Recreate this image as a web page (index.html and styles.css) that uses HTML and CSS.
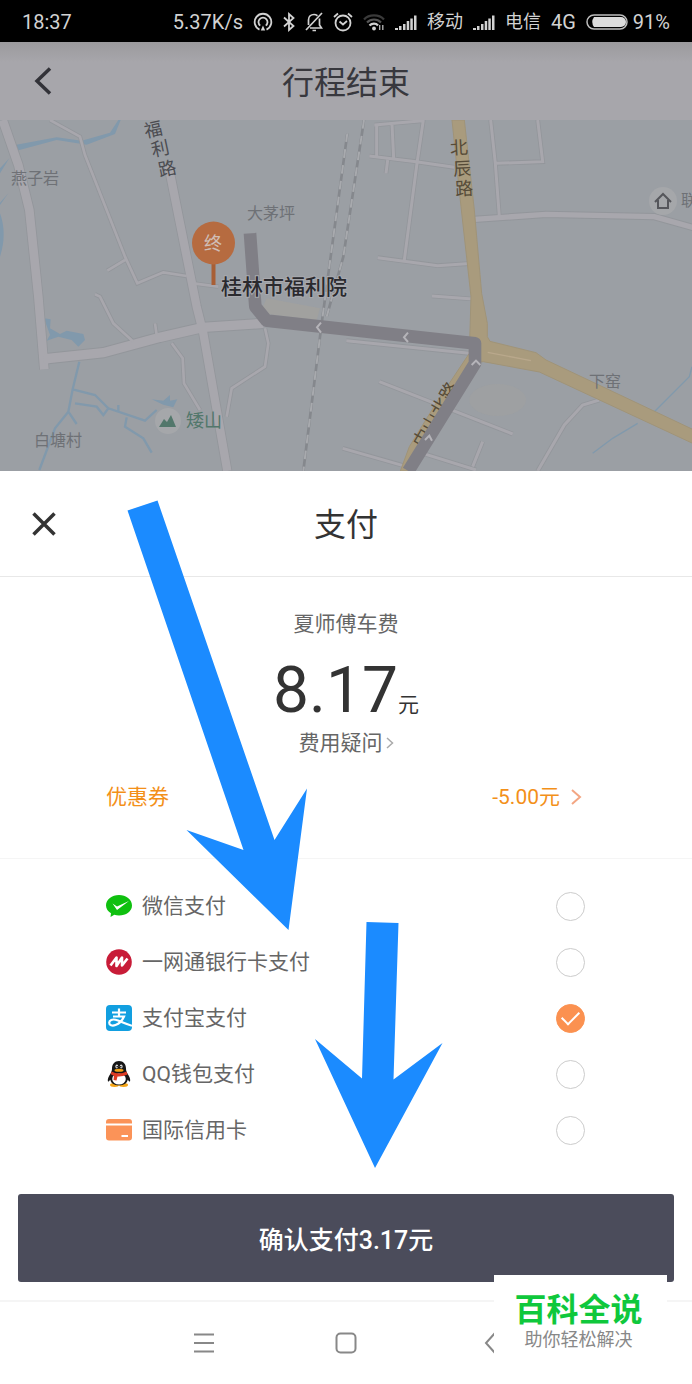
FILE: index.html
```html
<!DOCTYPE html>
<html lang="zh-CN">
<head>
<meta charset="UTF-8">
<meta name="viewport" content="width=device-width, initial-scale=1">
<title>支付</title>
<link rel="stylesheet" href="styles.css">
</head>
<body>
<div class="screen">

<div class="status">
    <span>18:37</span>
    <div class="status-right">
        <span>5.37K/s</span>
        <svg width="20" height="20" viewBox="0 0 20 20" fill="none" stroke="#d2d2d2" stroke-width="1.8">
            <path d="M6.5 17.6A8.3 8.3 0 1 1 13.5 17.6M7.2 13.6A4.5 4.5 0 1 1 12.8 13.6"/>
            <path d="M10 13.5L12.2 18.5H7.8Z" fill="#d2d2d2" stroke="none"/>
        </svg>
        <svg width="12" height="20" viewBox="0 0 12 20" fill="none" stroke="#d2d2d2" stroke-width="1.8">
            <path d="M1 5.5L10.5 14 6 18V2L10.5 6 1 14.5"/>
        </svg>
        <svg width="18" height="20" viewBox="0 0 18 20" fill="none" stroke="#d2d2d2" stroke-width="1.7">
            <path d="M1 18L17 1M3.5 13V8C3.5 4.500 6 2.500 9 2.500 10.500 2.500 11.500 3 12.500 3.700M14.500 6.500V13L16.500 16H5M7.500 18.500H11"/>
        </svg>
        <svg width="20" height="20" viewBox="0 0 20 20" fill="none" stroke="#d2d2d2" stroke-width="1.8">
            <circle cx="10" cy="11" r="7.500"/>
            <path d="M6.500 9.500L10 12.500 14 9M1 5L5 1.500M19 5L15 1.500"/>
        </svg>
        <svg width="22" height="20" viewBox="0 0 22 20" fill="none" stroke-width="2.200">
            <path d="M1 7.500C6 2 16 2 21 7.500" stroke="#3a3a3a"/>
            <path d="M4 10.500C8 6.500 14 6.500 18 10.500" stroke="#555"/>
            <path d="M6.500 13.500C9 11 13 11 15 13.500" stroke="#d2d2d2"/>
            <circle cx="11" cy="16.500" r="1.900" fill="#d2d2d2"/>
            <path d="M16.700 13V18M19.800 13V18" stroke="#bbb" stroke-width="1.300"/>
        </svg>
        <svg class="signal" width="22" height="20" viewBox="0 0 22 20"><path d="M0 16H3V18H0ZM4 14H6.500V18H4ZM8 12H10.500V18H8ZM11.700 9H14.200V18H11.700ZM15.300 6.500H17.800V18H15.300ZM19 3.500H21.500V18H19Z"/></svg>
        <span class="carrier">移动</span>
        <svg class="signal" width="22" height="20" viewBox="0 0 22 20"><path d="M0 16H3V18H0ZM4 14H6.500V18H4ZM8 12H10.500V18H8ZM11.700 9H14.200V18H11.700ZM15.300 6.500H17.800V18H15.300ZM19 3.500H21.500V18H19Z"/></svg>
        <span class="carrier">电信</span>
        <span>4G</span>
        <div class="battery">
            <svg width="42" height="16" viewBox="0 0 42 16">
                <rect x="1" y="1" width="40" height="14" rx="7" fill="none" stroke="#bdbdbd" stroke-width="1.500"/>
                <path d="M8 3H35A5 5 0 0 1 35 13H8Q4.500 8 8 3Z" fill="#dcdcdc"/>
            </svg>
            <span>91%</span>
        </div>
    </div>
</div>

<header class="trip-bar">
    <button class="icon-btn" aria-label="返回">
        <svg width="28" height="28" viewBox="0 0 28 28" fill="none" stroke="#323238" stroke-width="3.500"><path d="M20 1.500L7 14 20 26.500"/></svg>
    </button>
    <h1>行程结束</h1>
</header>

<svg class="map" viewBox="0 0 692 351" preserveAspectRatio="xMidYMid slice">
    <!-- west half, drawn on a 3x grid -->
    <g transform="translate(0 -10) scale(.33333)">
        <g class="water">
            <path d="M45 105L170 82 245 92 330 68 355 30H362L345 72 260 104 170 90 50 122Z"/>
            <path d="M0 310Q22 370 0 440Z"/>
            <path d="M28 145L0 190V175ZM25 250L0 285V278Z"/>
            <path d="M132 625L152 628 150 655 180 672 200 662 250 672 255 690 235 710 215 690 175 680 140 692 150 675Z"/>
            <path d="M455 868L490 872 510 855 510 872 532 868 520 892 490 884Z"/>
        </g>
        <g class="stream">
            <path d="M238 755L218 838 205 905 165 955 118 1080M218 838L285 855 325 895 435 932 470 900M205 905L230 942M225 880L290 890 310 915 325 895M380 922L375 950 430 985 455 1028M355 905V885" stroke-width="7"/>
        </g>
        <path d="M780 610L800 565 960 595 950 630Z" fill="#a1a19f"/>
        <g class="edge">
            <path d="M8 30L55 165 88 300 115 560 133 778" stroke-width="31"/>
            <path d="M130 747L310 728 480 682 610 652 790 640" stroke-width="34"/>
            <path d="M505 165L540 340 590 590 610 670 682 1083" stroke-width="30"/>
            <path d="M150 30L240 80 255 135 320 300 375 440 412 520 490 487 560 498M375 450L322 482M285 553L300 560 340 640 400 695M465 640L470 675M515 700L548 745 552 820 600 900M795 655L805 700 795 770 695 835 680 920M580 520L655 530" stroke-width="13"/>
        </g>
        <g class="road">
            <path d="M8 30L55 165 88 300 115 560 133 778" stroke-width="26"/>
            <path d="M130 747L310 728 480 682 610 652 790 640" stroke-width="28"/>
            <path d="M505 165L540 340 590 590 610 670 682 1083" stroke-width="25"/>
            <path d="M150 30L240 80 255 135 320 300 375 440 412 520 490 487 560 498M375 450L322 482M285 553L300 560 340 640 400 695M465 640L470 675M515 700L548 745 552 820 600 900M795 655L805 700 795 770 695 835 680 920M580 520L655 530" stroke-width="8"/>
        </g>
        <g class="rail">
            <path d="M1042 70L965 640 910 1083M1092 30L1030 440 980 620"/>
            <path class="rail-gap" d="M1042 70L965 640 910 1083M1092 30L1030 440 980 620"/>
        </g>
    </g>
    <!-- east half -->
    <g transform="translate(346 -10) scale(.33333)">
        <ellipse cx="455" cy="870" rx="85" ry="48" fill="#a1a19f" opacity=".5"/>
        <path class="stream" d="M1038 770L1030 800 925 905M875 940L800 985 740 1030" stroke-width="4"/>
        <g class="edge">
            <path d="M85 45L230 32M92 45V138M138 42L143 145M70 138L210 155 325 172M125 150L120 190M232 30L213 160 175 450M95 443L275 467 380 460M258 558L380 567M434 30L448 160 460 320M448 160L590 155 575 30M100 815L500 972M-10 1015L200 1075M230 1030L390 1080M410 995L380 1070M760 870L710 885 655 945 575 1083M1 692L370 730" stroke-width="14"/>
            <path d="M385 328L600 313 925 320 1050 355" stroke-width="22"/>
        </g>
        <g class="road">
            <path d="M85 45L230 32M92 45V138M138 42L143 145M70 138L210 155 325 172M125 150L120 190M232 30L213 160 175 450M95 443L275 467 380 460M258 558L380 567M434 30L448 160 460 320M448 160L590 155 575 30M100 815L500 972M-10 1015L200 1075M230 1030L390 1080M410 995L380 1070M760 870L710 885 655 945 575 1083M1 692L370 730" stroke-width="9"/>
            <path d="M385 328L600 313 925 320 1050 355" stroke-width="16"/>
        </g>
        <path class="main-road" d="M318 30H355L385 300 407 550 424 640V680L432 694 570 728 600 750 1040 958V1000L580 786 412 755 375 760 280 900 195 1083H163L190 1010 270 880 370 730 375 560 345 290Z"/>
        <path d="M425 727L555 752" stroke="#b9a88c" stroke-width="4"/>
    </g>

    <g class="road-name">
        <text x="144" y="16" transform="rotate(-12 153 9)">福</text>
        <text x="151" y="35" transform="rotate(-12 160 28)">利</text>
        <text x="158" y="55" transform="rotate(-12 167 48)">路</text>
    </g>
    <g class="road-name road-name-main">
        <text x="450" y="34" transform="rotate(-3 460 28)">北</text>
        <text x="453" y="55" transform="rotate(-3 462 48)">辰</text>
        <text x="455" y="75" transform="rotate(-3 464 68)">路</text>
        <text x="423" y="329" transform="rotate(-60 423 329)">中山北路</text>
    </g>

    <!-- driven route -->
    <g transform="translate(0 -10) scale(.33333)">
        <path class="route" d="M750 370L766 590 800 632 1425 700V760L1225 1083"/>
        <path class="route-mark" d="M963 638L951 652 963 668M1224 668L1212 682 1224 696M1415 765L1428 752 1441 765M1275 990L1288 977 1296 992"/>
    </g>

    <g class="place">
        <text x="11" y="64">燕子岩</text>
        <text x="247" y="99">大茅坪</text>
        <text x="34" y="326">白塘村</text>
        <text x="589" y="267">下窑</text>
        <text x="681" y="86">联</text>
    </g>
    <circle cx="168" cy="301" r="13" fill="#a5a7aa"/>
    <path d="M159 307L164 299 167 302 171 295 176 307Z" fill="#52776b"/>
    <text class="park" x="186" y="307">矮山</text>
    <circle cx="663" cy="81" r="14" fill="#a5a7aa"/>
    <path d="M655 82L663 74 671 82M658 80V88H668V80" fill="none" stroke="#55565b" stroke-width="2"/>

    <path d="M213.500 140V165" stroke="#a85f36" stroke-width="4"/>
    <circle cx="213.500" cy="123" r="21.500" fill="#b66b40"/>
    <text class="pin-text" x="213" y="130">终</text>
    <text class="dest" x="221" y="174">桂林市福利院</text>
</svg>

<main class="sheet">
    <div class="sheet-head">
        <button class="icon-btn" aria-label="关闭">
            <svg width="28" height="28" viewBox="0 0 28 28" fill="none" stroke="#333" stroke-width="3.500"><path d="M3.500 3.500L24.500 24.500M24.500 3.500L3.500 24.500"/></svg>
        </button>
        <h2>支付</h2>
    </div>

    <section class="fare">
        <p class="driver">夏师傅车费</p>
        <p class="price">8.17<span class="unit">元</span></p>
        <a class="question" href="#">费用疑问<svg width="8" height="12" viewBox="0 0 8 12" fill="none" stroke="#aaa" stroke-width="1.500"><path d="M1 1L6.500 6 1 11"/></svg></a>
        <a class="coupon" href="#">
            <span>优惠券</span>
            <span class="coupon-value">-5.00元<svg width="12" height="16" viewBox="0 0 12 16" fill="none" stroke="#f3a683" stroke-width="2"><path d="M2 1L10 8 2 15"/></svg></span>
        </a>
    </section>

    <form class="pay">
        <label class="method">
            <svg width="26" height="26" viewBox="0 0 26 26">
                <path d="M13 2C20 2 26 6.500 26 12.500S20 22.500 13 22.500C11.200 22.500 9.800 22.300 8.300 21.800L4.500 24 5 20.300C2 18.500 0 15.800 0 12.500 0 6.500 6 2 13 2Z" fill="#0fc00f"/>
                <path d="M6.500 10.500L11 13.500 23 8 11 17Z" fill="#fff"/>
            </svg>
            <span>微信支付</span>
            <input type="radio" name="method">
        </label>
        <label class="method">
            <svg width="26" height="26" viewBox="0 0 26 26">
                <circle cx="13" cy="13" r="12.800" fill="#c81c38"/>
                <path d="M4.500 16.500L10.500 8.500 10.500 17 16 8.500V16.500L21.500 9.500" fill="none" stroke="#fff" stroke-width="2.600" stroke-linejoin="round"/>
            </svg>
            <span>一网通银行卡支付</span>
            <input type="radio" name="method">
        </label>
        <label class="method">
            <svg width="26" height="26" viewBox="0 0 26 26">
                <rect width="26" height="26" rx="4" fill="#129fe0"/>
                <path d="M6 7.500H20M13 3.500V11.500M7 11.500H18C16.500 15 13.500 18.500 9.500 20 6 21.300 3.200 20 3.200 17.700 3.200 15 6.500 14 9.500 14.800 14 16 18 18.500 26 20.800" fill="none" stroke="#fff" stroke-width="2.200"/>
            </svg>
            <span>支付宝支付</span>
            <input type="radio" name="method" checked>
        </label>
        <label class="method">
            <svg width="26" height="26" viewBox="0 0 26 26">
                <ellipse cx="8.500" cy="24" rx="4.500" ry="1.900" fill="#f5a516"/>
                <ellipse cx="17.500" cy="24" rx="4.500" ry="1.900" fill="#f5a516"/>
                <path d="M13 0C8.500 0 6 3.200 6 7.500 6 9.500 5.500 11 4.300 13 2.500 15.800 1.200 18.500 2 20.500 3 20.500 3.500 19.500 4.300 18.700 5 22.500 8.500 24.300 13 24.300S21 22.500 21.700 18.700C22.500 19.500 23 20.500 24 20.500 24.800 18.500 23.500 15.800 21.700 13 20.500 11 20 9.500 20 7.500 20 3.200 17.500 0 13 0Z" fill="#161616"/>
                <ellipse cx="13" cy="18" rx="6.800" ry="5.500" fill="#fff"/>
                <ellipse cx="10.800" cy="5.500" rx="1.400" ry="2" fill="#ddd"/>
                <ellipse cx="15.200" cy="5.500" rx="1.400" ry="2" fill="#ddd"/>
                <circle cx="11.200" cy="5.800" r=".8"/>
                <circle cx="14.800" cy="5.800" r=".8"/>
                <ellipse cx="13" cy="9.300" rx="4.500" ry="1.500" fill="#f5a516"/>
                <path d="M5.500 10.500Q13 14.500 20.500 10.500L21.500 13.500Q16 16 11.500 15.500L10.500 19.500 7.500 19 8 14.800 4.800 13.200Z" fill="#dd3b24"/>
            </svg>
            <span>QQ钱包支付</span>
            <input type="radio" name="method">
        </label>
        <label class="method">
            <svg width="26" height="26" viewBox="0 0 26 26">
                <path d="M3 2H23A3 3 0 0 1 26 5V6.500H0V5A3 3 0 0 1 3 2ZM0 8.500H26V20.500A3 3 0 0 1 23 23.500H3A3 3 0 0 1 0 20.500Z" fill="#fb9358"/>
                <path d="M15.500 19H22" stroke="#fff" stroke-width="2"/>
            </svg>
            <span>国际信用卡</span>
            <input type="radio" name="method">
        </label>
        <button class="confirm" type="button">确认支付3.17元</button>
    </form>
</main>

<nav class="nav">
    <button class="icon-btn" aria-label="菜单"><svg width="24" height="24" viewBox="0 0 24 24" fill="none" stroke="#888" stroke-width="2"><path d="M2 3.500H22M2 12H22M2 20.500H22"/></svg></button>
    <button class="icon-btn" aria-label="主页"><svg width="24" height="24" viewBox="0 0 24 24" fill="none" stroke="#888" stroke-width="2"><rect x="2.500" y="2.500" width="19" height="19" rx="4"/></svg></button>
    <button class="icon-btn" aria-label="返回"><svg width="24" height="24" viewBox="0 0 24 24" fill="none" stroke="#888" stroke-width="2"><path d="M19 2L10 12 19 22"/></svg></button>
</nav>

<svg class="arrows" viewBox="0 0 692 1384" preserveAspectRatio="xMidYMin slice" fill="#1b8bff">
    <path d="M127.500 510.500L157.500 500.500 274.500 840 307 788.500 288.500 930 186.500 830 243.500 850Z"/>
    <path d="M366.500 922L398.500 923 393.500 1079.500 442.500 1043 375 1168 315 1039 362 1078.500Z"/>
</svg>

<div class="brand">
    <strong>百科全说</strong>
    <span>助你轻松解决</span>
</div>

</div>
</body>
</html>
```
FILE: styles.css
```css
* {
    box-sizing: border-box;
}
body {
    margin: 0;
    background: #fff;
    color: #333;
    font-family: Roboto, 'Noto Sans CJK SC', sans-serif;
    font-size: 21px;
    line-height: 32px;
}
h1, h2, p {
    margin: 0;
    font-weight: normal;
}
h1, h2 {
    padding-top: 3px;
    font-size: 32px;
    line-height: 48px;
}
a {
    color: inherit;
    text-decoration: none;
}
svg {
    display: block;
    flex: none;
}
.screen {
    position: relative;
    overflow: hidden;
}
.icon-btn {
    padding: 0;
    border: 0;
    background: none;
    cursor: pointer;
}

/* status bar */
.status {
    display: flex;
    justify-content: space-between;
    align-items: center;
    height: 42px;
    padding: 2px 22px 0;
    background: #000;
    color: #d2d2d2;
    font-size: 20px;
}
.status-right {
    display: flex;
    align-items: center;
    gap: 10px;
}
.carrier {
    font-size: 18px;
}
.signal {
    fill: #d2d2d2;
}
.battery {
    display: flex;
    align-items: center;
    gap: 5px;
}

/* title bars */
.trip-bar, .sheet-head {
    display: grid;
    grid-template-columns: 28px 1fr 28px;
    align-items: center;
    padding: 0 30px;
    text-align: center;
}
.trip-bar {
    height: 78px;
    background: linear-gradient(#9b9a9d, #a7a6ab 20px);
    color: #38383e;
}
.sheet-head {
    height: 106px;
    border-bottom: 1px solid #e8e8e8;
}

/* map */
.map {
    width: 100%;
    height: 351px;
    background: #9b9fa4;
}
.water {
    fill: #8199ac;
}
.stream {
    fill: none;
    stroke: #8199ac;
}
.edge {
    fill: none;
    stroke: #93969b;
}
.road {
    fill: none;
    stroke: #a8a7ad;
}
.main-road {
    fill: #a99b7d;
    stroke: #a09478;
    stroke-width: 3;
}
.rail {
    fill: none;
    stroke: #85888d;
    stroke-width: 8;
}
.rail-gap {
    stroke: #a8aaae;
    stroke-width: 6;
    stroke-dasharray: 26 22;
}
.route {
    fill: none;
    stroke: #807f86;
    stroke-width: 38;
    stroke-linejoin: round;
}
.route-mark {
    fill: none;
    stroke: #b5b4b9;
    stroke-width: 6;
}
.road-name {
    fill: #4b4c51;
    font-size: 18px;
}
.road-name-main {
    fill: #564b38;
}
.place {
    fill: #6e7176;
    font-size: 16px;
}
.park {
    fill: #52776b;
    font-size: 18px;
}
.pin-text {
    fill: #d0beb5;
    font-size: 18px;
    text-anchor: middle;
}
.dest {
    fill: #2a2a2e;
    font-size: 21px;
    font-weight: 500;
    stroke: #a8a9ae;
    stroke-width: 2px;
    paint-order: stroke;
}

/* fare */
.fare {
    display: flex;
    flex-direction: column;
    align-items: center;
    padding: 31px 0 45px;
    border-bottom: 1px solid #f5f5f5;
    color: #666;
}
.price {
    padding: 15px 0 0;
    color: #333;
    font-size: 64px;
    line-height: 72px;
}
.unit {
    font-size: 21px;
    line-height: 24px;
}
.question {
    display: flex;
    align-items: center;
    gap: 3px;
}
.coupon {
    display: flex;
    justify-content: space-between;
    width: 100%;
    max-width: 480px;
    padding: 22px 4px 0 0;
    color: #f39019;
}
.coupon-value {
    display: flex;
    align-items: center;
    gap: 10px;
}

/* payment methods */
.pay {
    padding: 19px 18px 18px;
    color: #666;
}
.method {
    display: flex;
    align-items: center;
    gap: 10px;
    max-width: 480px;
    height: 56px;
    margin: 0 auto;
    cursor: pointer;
}
.method input {
    display: grid;
    place-items: center;
    appearance: none;
    width: 29px;
    height: 29px;
    margin: 0 1px 0 auto;
    border: 1px solid #ccc;
    border-radius: 50%;
}
.method input:checked {
    border-color: #fb9150;
    background: #fb9150;
}
.method input:checked::after {
    content: '';
    width: 15px;
    height: 8px;
    margin-bottom: 4px;
    border: solid #fff;
    border-width: 0 0 2px 2px;
    transform: rotate(-45deg);
}
.confirm {
    display: block;
    width: 100%;
    height: 88px;
    margin-top: 36px;
    border: 0;
    border-radius: 3px;
    background: #4b4c5b;
    color: #fff;
    font-family: inherit;
    font-size: 25px;
    font-weight: 500;
    cursor: pointer;
}

/* system navigation */
.nav {
    display: flex;
    justify-content: center;
    align-items: center;
    gap: 118px;
    height: 84px;
    border-top: 2px solid #f5f5f5;
}

.arrows {
    position: absolute;
    top: 0;
    left: 0;
    width: 100%;
    height: 100%;
    pointer-events: none;
}
.brand {
    position: absolute;
    right: 25px;
    bottom: 0;
    width: 173px;
    height: 109px;
    padding: 15px 4px 0 0;
    background: #fff;
    text-align: center;
}
.brand strong, .brand span {
    display: block;
}
.brand strong {
    color: #0fc83c;
    font-size: 32px;
    line-height: 40px;
}
.brand span {
    color: #888;
    font-size: 18px;
    line-height: 20px;
}
```
